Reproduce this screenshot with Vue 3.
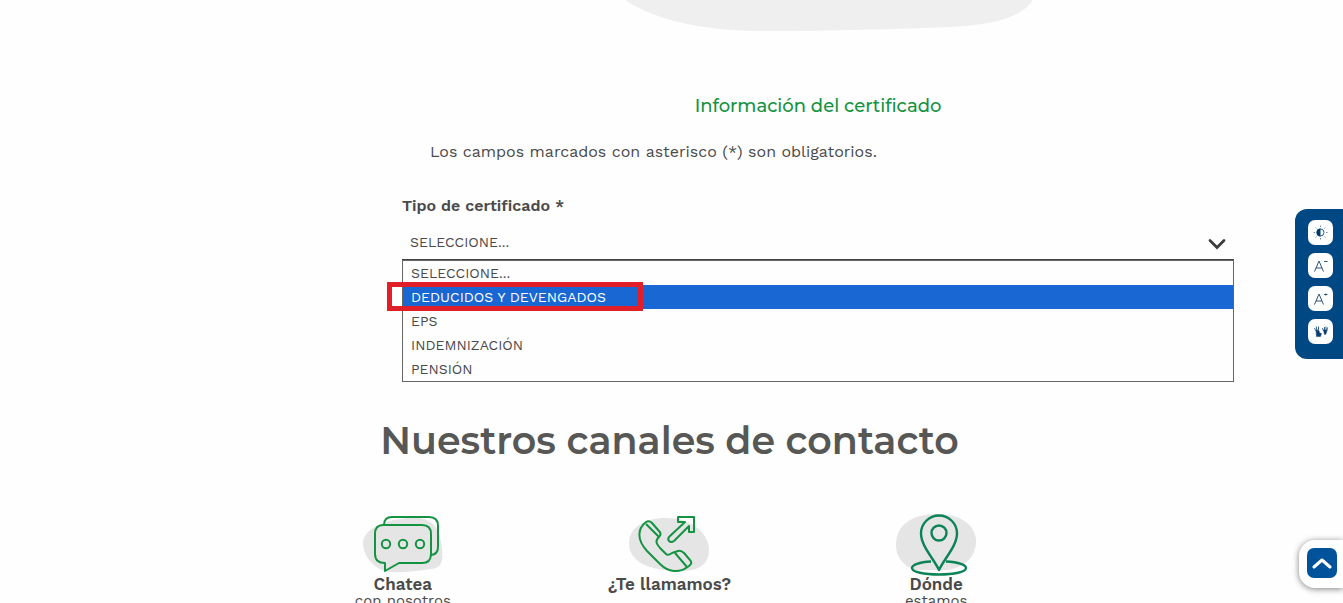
<script setup>
import { ref } from 'vue'

const options = ['SELECCIONE...', 'DEDUCIDOS Y DEVENGADOS', 'EPS', 'INDEMNIZACIÓN', 'PENSIÓN']
const selected = ref('SELECCIONE...')
const active = ref('DEDUCIDOS Y DEVENGADOS')
</script>

<template>
  <div class="page">
    <svg class="blob" width="416" height="31" viewBox="0 0 416 31" aria-hidden="true">
      <path d="M4 0C34 20 82 31 140 31C210 31 280 29 330 27C375 25 402 16 412 0Z" fill="#efefef" />
    </svg>

    <form class="form" @submit.prevent>
      <h2 class="form-title">Información del certificado</h2>
      <p class="hint">Los campos marcados con asterisco (*) son obligatorios.</p>
      <label class="label" for="tipo">Tipo de certificado *</label>
      <div class="field">
        <select id="tipo" v-model="selected" class="select">
          <option v-for="o in options" :key="o">{{ o }}</option>
        </select>
        <svg class="chevron" width="18" height="12" viewBox="0 0 18 12" aria-hidden="true">
          <path d="M2 2.500L9 9.500L16 2.500" fill="none" stroke="#3c3c3c" stroke-width="2.700" stroke-linecap="round" />
        </svg>
      </div>
      <ul class="list" role="listbox" aria-label="Tipo de certificado">
        <li
          v-for="o in options"
          :key="o"
          class="option"
          :class="{ active: o === active }"
          role="option"
          :aria-selected="o === active"
          @mouseenter="active = o"
          @click="selected = o"
        >
          {{ o }}<span v-if="o === options[1]" class="marker"></span>
        </li>
      </ul>
    </form>

    <section class="contact">
      <h1 class="contact-title">Nuestros canales de contacto</h1>
      <div class="channels">
        <a class="channel" href="#chat">
          <svg class="channel-icon" width="84" height="62" viewBox="0 0 84 62" aria-hidden="true">
            <path d="M2 31C1 16 20 7 45 4C68 1 78 12 80 28C83 45 82 54 70 55C48 58 28 61 17 54C8 48 3 40 2 31Z" fill="#e5e5e5" />
            <g fill="none" stroke="#149342" stroke-width="2" stroke-linejoin="round" transform="translate(1 0)">
              <path d="M22 11C22 6 25 3 30 3H67Q76 3 76 12V33Q76 41 68 41" />
              <path d="M21 11H60Q69 11 69 20V40Q69 49 60 49H37L23 57V49Q13 49 13 40V20Q13 11 21 11Z" />
              <circle cx="24" cy="30" r="4.200" /><circle cx="41" cy="30" r="4.200" /><circle cx="58" cy="30" r="4.200" />
            </g>
          </svg>
          <strong>Chatea</strong>
          <span>con nosotros</span>
        </a>
        <a class="channel" href="#llamada">
          <svg class="channel-icon" width="84" height="62" viewBox="0 0 84 62" aria-hidden="true">
            <path d="M2 29C2 14 17 4 39 4C65 4 82 20 82 36C82 50 72 57 54 57C31 57 2 52 2 29Z" fill="#e5e5e5" />
            <g fill="none" stroke="#149342" stroke-width="2" stroke-linejoin="round">
              <path d="M18 8Q21 6 24 9L31 17Q34 20 31 23C27 27 28 29 32 34L38 40Q40 42 44 39L50 37Q53 36 56 39L62 46Q65 49 61 52C51 60 40 58 32 50L19 37C9 26 9 15 18 8Z" transform="translate(1 0)" />
              <path d="M19 10L32 23M48 39L60 53" />
              <path d="M51 3H67V18H62V12L47 27Q44 29 42 27Q40 25 43 22L58 8H51Z" />
            </g>
          </svg>
          <strong>¿Te llamamos?</strong>
        </a>
        <a class="channel" href="#sedes">
          <svg class="channel-icon" width="84" height="62" viewBox="0 0 84 62" aria-hidden="true">
            <path d="M2 31C2 12 16 0 44 0C67 0 82 12 82 27C82 42 72 53 54 56H20C9 51 2 43 2 31Z" fill="#e5e5e5" />
            <g fill="none" stroke="#0c8357" stroke-width="2.400" stroke-linejoin="round">
              <path d="M45 56C40 45 27 32 27 19.500A18 18 0 0 1 63 19.500C63 32 50 45 45 56Z" />
              <circle cx="45" cy="19" r="7.500" />
              <path d="M37 47.500C25 48 18 51 18 54C18 58 30 60.500 45 60.500S72 58 72 54C72 51 65 48 52 47.500" />
            </g>
          </svg>
          <strong>Dónde</strong>
          <span>estamos</span>
        </a>
      </div>
    </section>

    <aside class="tools" aria-label="Accesibilidad">
      <button class="tool" type="button" aria-label="Contraste">
        <svg width="25" height="25" viewBox="0 0 25 25">
          <circle cx="12.500" cy="12.500" r="3.500" fill="#fff" stroke="#2c5d92" />
          <path d="M12.500 8.500a4 4 0 0 0 0 8Z" fill="#03386e" />
          <path d="M12.500 5.500V7M12.500 18V19.500M5.500 12.500H7M18 12.500H19.500M7.500 7.500L8.500 8.500M16.500 16.500L17.500 17.500M7.500 17.500L8.500 16.500M16.500 8.500L17.500 7.500" stroke="#6f93b8" />
        </svg>
      </button>
      <button class="tool" type="button" aria-label="Reducir texto">
        <svg width="25" height="25" viewBox="0 0 25 25" fill="none" stroke="#2c5578">
          <path d="M6.500 18.500L11 8L15.500 18.500M8 15H14M16 8.500H19.500" />
        </svg>
      </button>
      <button class="tool" type="button" aria-label="Aumentar texto">
        <svg width="25" height="25" viewBox="0 0 25 25" fill="none" stroke="#2c5578">
          <path d="M6.500 18.500L11 8L15.500 18.500M8 15H14M16 8.500H19.500M17.750 7.500V9.500" />
        </svg>
      </button>
      <button class="tool" type="button" aria-label="Lengua de señas">
        <svg width="25" height="25" viewBox="0 0 25 25" fill="#0b3d70" stroke="#0b3d70">
          <path d="M8 11L11 11.500L11.500 14L13.500 14.500L12.500 17.500H8.500ZM15.500 11H19L18 15L16.500 15.500Z" stroke-width="0.500" />
          <path d="M8 12L6.500 9M8.800 11L8.300 7.500M10.500 11V7.500M15.500 12L14.500 9M16.500 11V8M18 11V7.500M18.800 12L19.500 8.500" stroke-width="0.800" />
        </svg>
      </button>
    </aside>

    <div class="top-wrap">
      <button class="top" type="button" aria-label="Volver arriba">
        <svg width="20" height="12" viewBox="0 0 20 12"><path d="M2 10L10 3L18 10" fill="none" stroke="#fff" stroke-width="3" stroke-linecap="round" stroke-linejoin="round" /></svg>
      </button>
    </div>
  </div>
</template>

<style>
body {
  background: #fefefe;
}
</style>

<style scoped>
.page {
  height: 100vh;
  overflow: hidden;
  display: flex;
  flex-direction: column;
  color: #4a4a4a;
  font-family: "Work Sans", Inter, "Liberation Sans", sans-serif;
  font-size: 16px;
  line-height: 24px;
}
.blob {
  flex: none;
  align-self: center;
  margin-left: 314px;
}
.form {
  margin: 0 109px 0 402px;
}
.form-title {
  margin: 63px 0 22px;
  text-align: center;
  font-family: Montserrat, Inter, sans-serif;
  font-size: 18px;
  font-weight: 500;
  color: #149342;
}
.hint {
  margin: 0 0 30px;
  padding-left: 28px;
}
.label {
  display: block;
  font-weight: 600;
}
.field {
  display: grid;
  align-items: center;
  margin-top: 8px;
}
.select {
  grid-area: 1 / 1;
  width: 100%;
  height: 34px;
  padding: 0 8px 2px;
  border: 0;
  border-bottom: 1px solid #444;
  border-radius: 0;
  background: transparent;
  appearance: none;
  color: #4a4a4a;
  font-family: inherit;
  font-size: 14px;
}
.chevron {
  grid-area: 1 / 1;
  justify-self: end;
  margin: 2px 8px 0 0;
  pointer-events: none;
}
.list {
  margin: 0;
  padding: 0;
  border: 1px solid #666;
  list-style: none;
}
.option {
  position: relative;
  padding-left: 8px;
  font-size: 14px;
}
.option.active {
  background: #1967d2;
  color: #fff;
}
.marker {
  position: absolute;
  top: -3px;
  left: -16px;
  width: 246px;
  height: 19px;
  border: 5px solid #e01f28;
}
.contact {
  width: 800px;
  max-width: 100%;
  margin: 35px auto 0;
  padding-right: 4px;
}
.contact-title {
  margin: 0 0 49px;
  text-align: center;
  white-space: nowrap;
  font-family: Montserrat, Inter, sans-serif;
  font-size: 38px;
  font-weight: 600;
  line-height: 48px;
  color: #575756;
}
.channels {
  display: grid;
  grid-template-columns: repeat(3, 1fr);
}
.channel {
  display: flex;
  flex-direction: column;
  align-items: center;
  color: #4a4a4a;
  text-decoration: none;
  line-height: 17px;
}
.channel strong {
  font-size: 17px;
  font-weight: 600;
}
.channel span {
  font-size: 15px;
}
.tools {
  position: fixed;
  top: 209px;
  right: 0;
  display: grid;
  gap: 8px;
  padding: 11px 10px 15px 13px;
  border-radius: 12px 0 0 12px;
  background: #004884;
}
.tool {
  display: grid;
  width: 25px;
  height: 25px;
  padding: 0;
  border: 0;
  border-radius: 7px;
  background: #fff;
}
.top-wrap {
  position: fixed;
  right: 0;
  bottom: 15px;
  padding: 8px 6px 10px 8px;
  border-radius: 16px 0 0 16px;
  background: #fff;
  box-shadow: 0 1px 6px rgba(0, 0, 0, 0.5);
}
.top {
  display: grid;
  place-items: center;
  width: 30px;
  height: 30px;
  padding: 0;
  border: 0;
  border-radius: 7px;
  background: #00529a;
}
</style>
